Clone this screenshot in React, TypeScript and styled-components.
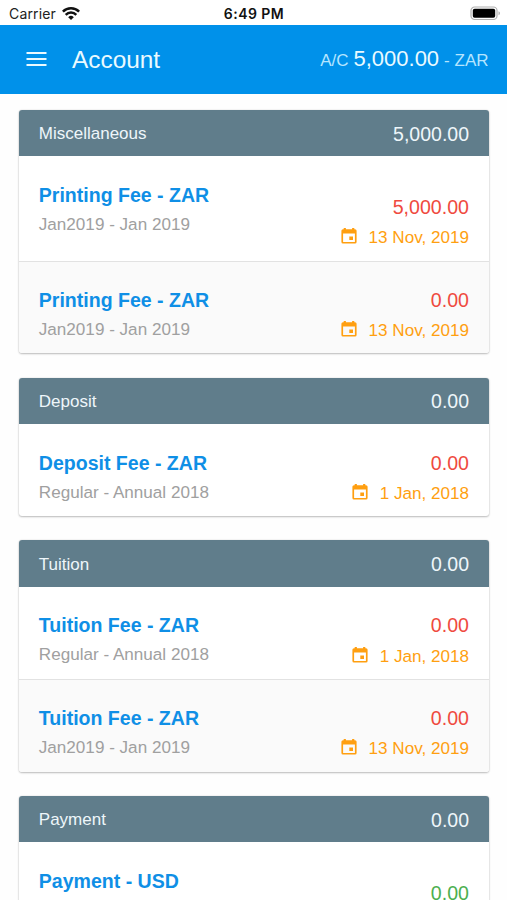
import React from "react";
import styled, { createGlobalStyle } from "styled-components";

const GlobalStyle = createGlobalStyle`
  html, body { margin: 0; padding: 0; background: #fff; }
  body { overflow: hidden; font-family: "Liberation Sans", Arial, sans-serif; }
  *, *::before, *::after { box-sizing: border-box; }
`;

const Screen = styled.div`
  display: flex;
  flex-direction: column;
  width: 100%;
  height: 900px;
  overflow: hidden;
  background: #fefefe;
`;

const StatusBar = styled.div`
  display: grid;
  grid-template-columns: 1fr auto 1fr;
  align-items: center;
  flex: none;
  height: 25px;
  padding: 2px 6px 0 9px;
  background: #fff;
  font: 400 14px/20px Inter, "Liberation Sans", sans-serif;
  color: #222;
`;

const Carrier = styled.div`
  display: flex;
  align-items: center;
  gap: 6px;
`;

const CarrierName = styled.span`
  letter-spacing: 0.15px;
`;

const Clock = styled.span`
  font-weight: 600;
  font-size: 14px;
  color: #111;
  letter-spacing: 0.45px;
  margin-right: 2px;
`;

const BatteryIcon = styled.svg`
  display: block;
  justify-self: end;
`;

const AppBar = styled.header`
  display: flex;
  align-items: center;
  flex: none;
  height: 69px;
  padding: 0 18.5px 0 26px;
  background: #0091ea;
  color: #eafaff;
`;

const MenuButton = styled.button`
  display: block;
  border: 0;
  padding: 0;
  margin-top: -2px;
  background: none;
  color: inherit;
  height: 16px;
  svg { display: block; }
`;

const PageTitle = styled.h1`
  margin: 0 auto 0 25px;
  font-weight: 400;
  font-size: 24.4px;
  line-height: 30px;
`;

const Balance = styled.div`
  display: flex;
  align-items: baseline;
  gap: 5px;
  font-size: 17px;
  line-height: 28px;
  color: #b5e5ff;
`;

const BalanceValue = styled.span`
  font-size: 22px;
  color: #eafaff;
`;

const Sections = styled.main`
  display: flex;
  flex-direction: column;
  gap: 24.1px;
  padding: 15.7px 18px 0 19.3px;
`;

const Card = styled.section`
  flex: none;
  border-radius: 3px;
  overflow: hidden;
  background: #fff;
  box-shadow: 0 1px 2px rgba(0, 0, 0, 0.24), 0 0 2px rgba(0, 0, 0, 0.12);
`;

const CardHeader = styled.div`
  display: flex;
  align-items: center;
  justify-content: space-between;
  height: 46.5px;
  padding: 1.2px 20px 0 19.5px;
  background: #607d8b;
  color: #eef6fa;
`;

const CardName = styled.h2`
  margin: 1px 0 0;
  font-weight: 400;
  font-size: 17px;
  line-height: 22px;
`;

const HeaderAmount = styled.span`
  font-size: 19.5px;
  line-height: 24px;
`;

const Row = styled.div<{ $tall?: boolean }>`
  display: flex;
  justify-content: space-between;
  height: ${(p) => (p.$tall ? 105 : 92.3)}px;
  padding: 26.5px 20px 0 19.5px;
  & + & {
    padding-top: 25.5px;
    border-top: 1.5px solid #e2e2e2;
    background: #fafafa;
  }
`;

const FeeName = styled.h3`
  margin: 0;
  font-weight: 700;
  font-size: 19.55px;
  line-height: 24px;
  color: #0f8fe6;
`;

const Period = styled.p`
  margin: 6px 0 0;
  font-size: 17.1px;
  line-height: 24px;
  color: #a0a0a0;
`;

const Figures = styled.div<{ $tall?: boolean }>`
  display: flex;
  flex-direction: column;
  align-items: flex-end;
  padding-top: ${(p) => (p.$tall ? 12 : 0)}px;
`;

const Amount = styled.span<{ $credit?: boolean }>`
  font-size: 19.6px;
  line-height: 24px;
  color: ${(p) => (p.$credit ? "#4caf50" : "#ef4a40")};
`;

const DueDate = styled.div`
  display: flex;
  align-items: center;
  gap: 11.5px;
  margin-top: 7.1px;
  font-size: 17.1px;
  line-height: 24px;
  color: #ff9f10;
  svg { display: block; margin-top: -3px; }
`;

interface Fee {
  name: string;
  period: string;
  amount: string;
  date: string;
  credit?: boolean;
  tall?: boolean;
}

interface Group {
  name: string;
  total: string;
  fees: Fee[];
}

const groups: Group[] = [
  {
    name: "Miscellaneous",
    total: "5,000.00",
    fees: [
      { name: "Printing Fee - ZAR", period: "Jan2019 - Jan 2019", amount: "5,000.00", date: "13 Nov, 2019", tall: true },
      { name: "Printing Fee - ZAR", period: "Jan2019 - Jan 2019", amount: "0.00", date: "13 Nov, 2019" },
    ],
  },
  {
    name: "Deposit",
    total: "0.00",
    fees: [{ name: "Deposit Fee - ZAR", period: "Regular - Annual 2018", amount: "0.00", date: "1 Jan, 2018" }],
  },
  {
    name: "Tuition",
    total: "0.00",
    fees: [
      { name: "Tuition Fee - ZAR", period: "Regular - Annual 2018", amount: "0.00", date: "1 Jan, 2018" },
      { name: "Tuition Fee - ZAR", period: "Jan2019 - Jan 2019", amount: "0.00", date: "13 Nov, 2019" },
    ],
  },
  {
    name: "Payment",
    total: "0.00",
    fees: [{ name: "Payment - USD", period: "", amount: "0.00", date: "", credit: true, tall: true }],
  },
];

const WifiIcon = () => (
  <svg width="18" height="14" viewBox="0 0 18 14" fill="none" stroke="#111" strokeWidth="2.5">
    <path d="M0.9 4.6a11.6 11.6 0 0 1 16.2 0" />
    <path d="M3.7 7.8a7.500 7.500 0 0 1 10.600 0" />
    <path d="M6.2 10.2a4 4 0 0 1 5.600 0L9 13z" fill="#111" stroke="none" />
  </svg>
);

const CalendarIcon = () => (
  <svg width="16" height="16" viewBox="0 0 16 16" fill="none">
    <path d="M2.7 0h2.200v2H2.700zM11.100 0h2.200v2h-2.200z" fill="currentColor" />
    <path
      fillRule="evenodd"
      fill="currentColor"
      d="M2 1.2h12a1.600 1.600 0 0 1 1.600 1.600v11.200A1.600 1.600 0 0 1 14 15.600H2A1.600 1.600 0 0 1 .4 14V2.800A1.600 1.600 0 0 1 2 1.200zM2.100 5.400v8.500h11.800V5.400z"
    />
    <path d="M8.300 8.400h3.700v3.500H8.300z" fill="currentColor" />
  </svg>
);

export default function App() {
  return (
    <Screen>
      <GlobalStyle />
      <StatusBar>
        <Carrier>
          <CarrierName>Carrier</CarrierName>
          <WifiIcon />
        </Carrier>
        <Clock>6:49 PM</Clock>
        <BatteryIcon width="31" height="15" viewBox="0 0 31 15">
          <rect x="1" y="1" width="26" height="12.5" rx="3.6" fill="#fff" stroke="#b0b0b0" strokeWidth="1.2" />
          <rect x="2.8" y="2.7" width="22.4" height="9.1" rx="1.8" fill="#000" />
          <path d="M28.5 5.2c2 .8 2 3.300 0 4.100z" fill="#b0b0b0" />
        </BatteryIcon>
      </StatusBar>
      <AppBar>
        <MenuButton aria-label="Menu">
          <svg width="21" height="16" viewBox="0 0 21 16" stroke="currentColor" strokeWidth="2">
            <path d="M0.500 2h20M0.500 8h20M0.500 14h20" />
          </svg>
        </MenuButton>
        <PageTitle>Account</PageTitle>
        <Balance>
          <span>A/C</span>
          <BalanceValue>5,000.00</BalanceValue>
          <span>- ZAR</span>
        </Balance>
      </AppBar>
      <Sections>
        {groups.map((group) => (
          <Card key={group.name}>
            <CardHeader>
              <CardName>{group.name}</CardName>
              <HeaderAmount>{group.total}</HeaderAmount>
            </CardHeader>
            {group.fees.map((fee, i) => (
              <Row key={i} $tall={fee.tall}>
                <div>
                  <FeeName>{fee.name}</FeeName>
                  {fee.period && <Period>{fee.period}</Period>}
                </div>
                <Figures $tall={fee.tall}>
                  <Amount $credit={fee.credit}>{fee.amount}</Amount>
                  {fee.date && (
                    <DueDate>
                      <CalendarIcon />
                      <span>{fee.date}</span>
                    </DueDate>
                  )}
                </Figures>
              </Row>
            ))}
          </Card>
        ))}
      </Sections>
    </Screen>
  );
}
